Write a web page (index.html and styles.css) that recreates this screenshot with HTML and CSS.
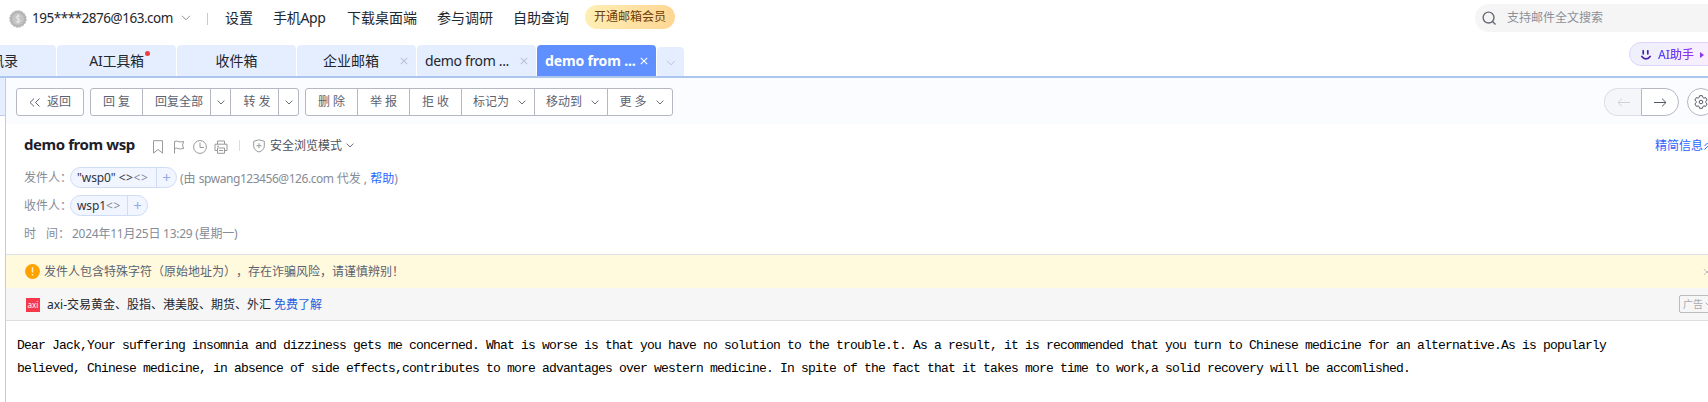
FILE: index.html
```html
<!DOCTYPE html>
<html lang="zh-CN">
<head>
<meta charset="utf-8">
<title>demo from wsp</title>
<link rel="stylesheet" href="styles.css">
</head>
<body>
<header class="topbar">
  <svg class="coin" viewBox="0 0 18 18"><circle cx="9" cy="9" r="8.2" fill="#b5b5b5" stroke="#b5b5b5" stroke-dasharray="2 1.2"/><circle cx="9" cy="9" r="6" fill="#c4c4c4"/><path d="M11.3 6.7C10.7 5.6 7 5.4 7 7.3 7 9.3 11.2 8.4 11.2 10.6 11.2 12.6 7.3 12.4 6.7 11.1M9 4.5v9" fill="none" stroke="#eee"/></svg>
  <span class="account">195****2876@163.com</span>
  <svg class="acc-arrow" viewBox="0 0 10 6"><path d="M1 .8l4 4 4-4" fill="none" stroke="#8c9099"/></svg>
  <i class="top-sep"></i>
  <nav class="topnav"><a>设置</a><a class="app">手机App</a><a>下载桌面端</a><a>参与调研</a><a>自助查询</a></nav>
  <a class="vip">开通邮箱会员</a>
  <div class="search">
    <svg viewBox="0 0 16 16"><circle cx="7" cy="7" r="5.8" fill="none" stroke="#666b75" stroke-width="1.5"/><path d="M11 11l3.4 3.4" stroke="#666b75" stroke-width="1.5"/></svg>
    <span>支持邮件全文搜索</span>
  </div>
</header>
<div class="tabs">
  <div class="tab first"><span>通讯录</span></div>
  <div class="tab center"><span class="dotted">AI工具箱</span></div>
  <div class="tab center"><span>收件箱</span></div>
  <div class="tab closable"><span class="wide">企业邮箱</span><svg class="x" viewBox="0 0 8 8"><path d="M.8.8l6.4 6.4M7.2.8L.8 7.2"/></svg></div>
  <div class="tab closable"><span class="demo">demo from ...</span><svg class="x" viewBox="0 0 8 8"><path d="M.8.8l6.4 6.4M7.2.8L.8 7.2"/></svg></div>
  <div class="tab closable active"><span class="demo">demo from ...</span><svg class="x" viewBox="0 0 8 8"><path d="M.8.8l6.4 6.4M7.2.8L.8 7.2"/></svg></div>
  <div class="tab more"><svg viewBox="0 0 10 6"><path d="M1 .8l4 4 4-4" fill="none" stroke="#b9c3d8"/></svg></div>
  <div class="assistant">
    <svg class="smile" viewBox="0 0 10 10"><path d="M2.2.8v3M6.8.8v3M.8 6.4C2.8 9.8 7.2 9.8 9.2 6.4" fill="none" stroke="#4b1fa8" stroke-width="1.7" stroke-linecap="round"/></svg>
    <span>AI助手</span>
    <svg class="play" viewBox="0 0 4 6"><path d="M0 0l4 3-4 3z" fill="#8a35ee"/></svg>
  </div>
</div>
<div class="workspace">
  <aside class="rail"><div class="rail-head"></div></aside>
  <main class="mail">
    <div class="toolbar">
      <div class="group back"><button><svg class="dbl" viewBox="0 0 12 9"><path d="M5 .6L1 4.5l4 3.9M10.5.6l-4 3.9 4 3.9" fill="none" stroke="#5c6270"/></svg>返回</button></div>
      <div class="group">
        <button class="w52">回 复</button><button class="w68">回复全部</button><button class="drop"><svg class="chev" viewBox="0 0 8 5"><path d="M.7.6L4 4 7.3.6"/></svg></button><button class="w48">转 发</button><button class="drop last"><svg class="chev" viewBox="0 0 8 5"><path d="M.7.6L4 4 7.3.6"/></svg></button>
      </div>
      <div class="group">
        <button class="w52">删 除</button><button class="w52">举 报</button><button class="w52">拒 收</button><button class="w73">标记为<svg class="chev" viewBox="0 0 8 5"><path d="M.7.6L4 4 7.3.6"/></svg></button><button class="w73">移动到<svg class="chev" viewBox="0 0 8 5"><path d="M.7.6L4 4 7.3.6"/></svg></button><button class="w64">更 多<svg class="chev" viewBox="0 0 8 5"><path d="M.7.6L4 4 7.3.6"/></svg></button>
      </div>
      <div class="pager">
        <button class="prev"><svg viewBox="0 0 13 9"><path d="M13 4.5H1M5 .6L1 4.5l4 3.9" fill="none" stroke="#d0d2d9"/></svg></button><button class="next"><svg viewBox="0 0 13 9"><path d="M0 4.5h12M8 .6l4 3.9-4 3.9" fill="none" stroke="#555b66"/></svg></button>
      </div>
      <button class="gear"><svg viewBox="0 0 14 14"><path d="M5.6 .7h2.8l.5 1.8 1 .6 1.8-.5 1.4 2.4-1.3 1.4v1.2l1.3 1.4-1.4 2.4-1.8-.5-1 .6-.5 1.800H5.600l-.5-1.800-1-.6-1.800.5L.9 9l1.300-1.400V6.400L.9 5l1.400-2.400 1.800.5 1-.6z" fill="none" stroke="#555b66"/><circle cx="7" cy="7" r="1.8" fill="none" stroke="#555b66"/></svg></button>
    </div>
    <section class="head">
      <div class="subject-row">
        <h1>demo from wsp</h1>
        <svg class="ic bookmark" viewBox="0 0 12 14"><path d="M1.5.7h9v12.4L6 9.5l-4.500 3.600z"/></svg>
        <svg class="ic flag" viewBox="0 0 12 14"><path d="M1.500 13.500V1.500C4 0 6 3 10.700 1.500L9.500 5l1.200 3.500C6 10 4 7 1.500 8.500"/></svg>
        <svg class="ic clock" viewBox="0 0 14 14"><circle cx="7" cy="7" r="6.400"/><path d="M7 2.800V7.500h4"/></svg>
        <svg class="ic printer" viewBox="0 0 14 14"><path d="M3.500 4V1h7v3M3.500 10.500h-2.500V4.200h12v6.300h-2.500M3.500 8h7v5.300h-7zM5 10.500h4M3 6.200h2"/></svg>
        <i class="sub-sep"></i>
        <svg class="ic shield" viewBox="0 0 12 14"><path d="M6 .8L11.300 2.300v4.900C11.300 10 9 12 6 13 3 12 .7 10 .7 7.200V2.300zM6 4.200v5M3.500 6.700h5"/></svg>
        <span class="safe">安全浏览模式</span>
        <svg class="chev" viewBox="0 0 8 5"><path d="M.7.6L4 4 7.3.6"/></svg>
        <a class="brief">精简信息<svg viewBox="0 0 8 8"><path d="M.5 4L3.500 1l3 3M.5 7.500l3-3 3 3" fill="none" stroke="#2b66ff"/></svg></a>
      </div>
      <div class="row">
        <span class="label">发件人：</span>
        <span class="pill"><span class="name from">"wsp0" <span class="angle">&lt;&gt;</span><em>&lt;&gt;</em></span><b>+</b></span>
        <span class="via"><span>(由 </span><span class="addr">spwang123456@126.com</span><span> 代发 , </span><a>帮助</a>)</span>
      </div>
      <div class="row second">
        <span class="label">收件人：</span>
        <span class="pill"><span class="name to">wsp1<em>&lt;&gt;</em></span><b>+</b></span>
      </div>
      <div class="row third">
        <span class="label time-label"><span>时</span><span>间：</span></span>
        <span class="time">2024年11月25日 13:29 (星期一)</span>
      </div>
    </section>
    <div class="warning">
      <svg class="alert" viewBox="0 0 15 15"><circle cx="7.500" cy="7.500" r="7.400" fill="#ffa200"/><path d="M7.500 3.300v5.200M7.500 10v1.600" stroke="#fff3c0" stroke-width="1.500"/></svg>
      <span>发件人包含特殊字符（原始地址为），存在诈骗风险，请谨慎辨别！</span>
      <svg class="close" viewBox="0 0 8 8"><path d="M.8.8l6.400 6.400M7.200.8L.8 7.200" fill="none" stroke="#c0c0bd"/></svg>
    </div>
    <div class="ad">
      <span class="logo">axi</span>
      <span class="ad-text">axi-交易黄金、股指、港美股、期货、外汇</span><a>免费了解</a>
      <span class="ad-tag">广告<svg viewBox="0 0 8 5"><path d="M.7.600L4 4 7.300.600" fill="none" stroke="#aaa"/></svg></span>
    </div>
    <article class="body">
      <p>Dear Jack,Your suffering insomnia and dizziness gets me concerned. What is worse is that you have no solution to the trouble.t. As a result, it is recommended that you turn to Chinese medicine for an alternative.As is popularly</p>
      <p>believed, Chinese medicine, in absence of side effects,contributes to more advantages over western medicine. In spite of the fact that it takes more time to work,a solid recovery will be accomlished.</p>
    </article>
  </main>
</div>
</body>
</html>
```
FILE: styles.css
```css
* { box-sizing: border-box; }
html, body { margin: 0; height: 100%; overflow: hidden; }
body { width: 1708px; height: 402px; background: #fff; color: #22262f; font: 14px/20px "Noto Sans", "Noto Sans CJK SC", sans-serif; white-space: nowrap; text-spacing-trim: space-all; }
svg { display: block; flex: none; }
i { display: block; flex: none; }
button { font: inherit; margin: 0; padding: 0; border: 0; background: none; color: inherit; }

.topbar { display: flex; align-items: center; height: 45px; padding: 0 0 9px 9px; }
.coin { width: 18px; height: 18px; margin-top: 2px; }
.account { width: 142px; margin-left: 5px; font-size: 13.500px; letter-spacing: -.48px; }
.acc-arrow { width: 10px; height: 6px; margin-left: 7px; }
.top-sep { width: 1px; height: 12px; margin: 2px 17px 0 16px; background: #c8cad0; }
.topnav { display: flex; gap: 20px; }
.app { width: 54px; letter-spacing: -.3px; }
.vip { margin: -3px 0 0 16px; width: 90px; height: 24px; border-radius: 12px; background: linear-gradient(90deg, #ffefb5, #ffd693); color: #6b3c08; font-size: 12px; line-height: 23px; text-align: center; }
.search { display: flex; align-items: center; width: 250px; height: 28px; margin: 0 -17px 0 auto; border-radius: 14px; background: #f5f5f5; color: #8b8f98; font-size: 12px; flex: none; }
.search svg { width: 15px; height: 15px; margin: 0 10px 0 7px; }

.tabs { display: flex; align-items: flex-end; gap: 1px; height: 33px; border-bottom: 2px solid #adc6ee; }
.tab { display: flex; align-items: center; width: 119px; height: 31px; border-radius: 4px 4px 0 0; background: #e5eeff; flex: none; }
.tab.first { width: 56px; justify-content: flex-end; padding-right: 38px; border-top-left-radius: 0; overflow: hidden; }
.center { justify-content: center; }
.dotted { position: relative; letter-spacing: -.2px; }
.dotted::after { content: ""; position: absolute; right: -6px; top: 0; width: 5px; height: 5px; border-radius: 50%; background: #f13c3c; }
.closable { justify-content: space-between; padding: 0 8px; }
.wide { margin-left: 18px; }
.demo { letter-spacing: -.35px; }
.x { width: 8px; height: 8px; }
.x path { fill: none; stroke: #b9c3d8; stroke-width: 1.100; }
.active { background: #6090ff; color: #fff; font-weight: 700; }
.active .demo { letter-spacing: -.15px; }
.active .x path { stroke: #fff; }
.tab.more { width: 27px; height: 29px; justify-content: center; }
.more svg { width: 10px; height: 6px; margin-top: 2px; }
.assistant { display: flex; align-items: center; align-self: flex-start; width: 90px; height: 24px; margin: -3px -11px 0 auto; padding-left: 11px; border: 1px solid #dfd3fb; border-radius: 12px; background: linear-gradient(90deg, #eef0fc, #f8eeff); font-size: 12px; font-weight: 500; flex: none; }
.assistant span { margin: 2px 6px 0 7px; background: linear-gradient(90deg, #4d45ee, #9233ee); -webkit-background-clip: text; color: transparent; }
.smile { width: 10px; height: 10px; margin-top: 2px; }
.play { width: 4px; height: 6px; margin-top: 2px; }

.workspace { display: flex; height: 324px; }
.rail { width: 6px; border-right: 1px solid #bccdf1; flex: none; }
.rail-head { height: 38px; background: #e5eeff; border-bottom: 1px solid #bccdf1; }
.mail { width: 1702px; flex: none; }
.toolbar { display: flex; height: 46px; padding: 10px 0 0 10px; gap: 6px; background: #fbfcff; color: #5c6270; font-size: 12px; }
.group { display: flex; height: 28px; border: 1px solid #b5b8c3; border-radius: 3px; background: #fff; }
.group button { display: flex; align-items: center; justify-content: center; border-right: 1px solid #b5b8c3; }
.group button:last-child { border-right: 0; }
.back button { width: 66px; gap: 6px; }
.dbl { width: 12px; height: 9px; }
.w52 { width: 52px; }
.group .w68 { width: 68px; padding-left: 5px; }
.group .w48 { width: 48px; padding-left: 5px; }
.w73 { width: 73px; }
.w64 { width: 64px; }
.group .w73, .group .w64 { gap: 9px; padding-left: 3px; }
.drop { width: 20px; }
.last { width: 19px; }
.chev { width: 8px; height: 5px; }
.chev path { fill: none; stroke: #686e7a; }
.pager { display: flex; height: 28px; margin-left: auto; }
.pager button { display: flex; align-items: center; justify-content: center; width: 38px; border: 1px solid #b5b8c3; background: #fff; }
.pager svg { width: 13px; height: 9px; }
.pager .prev { width: 37px; border-color: #dddfe7; border-right: 0; border-radius: 14px 0 0 14px; background: #f5f6fa; }
.pager .next { border-radius: 0 14px 14px 0; }
.gear { display: flex; align-items: center; justify-content: center; width: 28px; height: 28px; margin: 0 -7px 0 2px; border: 1px solid #b5b8c3; border-radius: 50%; background: #fff; flex: none; }
.gear svg { width: 14px; height: 14px; }

.head { height: 131px; padding: 9px 0 0 18px; border-bottom: 1px solid #dfe2ea; color: #868b96; font-size: 12px; }
.subject-row { display: flex; align-items: center; height: 25px; }
h1 { width: 111px; margin: -3px 17px 0 0; color: #1c202a; font-size: 15px; line-height: 22px; letter-spacing: -.42px; }
.ic { width: 12px; height: 14px; margin-top: 2px; }
.ic path, .ic circle { fill: none; stroke: #999; }
.flag { margin-left: 9px; }
.clock { width: 14px; margin-left: 8px; }
.printer { width: 14px; margin-left: 7px; }
.sub-sep { width: 1px; height: 11px; margin: 0 13px 0 11px; background: #dcdde2; }
.shield { margin-top: 0; }
.safe { margin: 1px 4px 0 5px; color: #4d525d; }
.brief { display: flex; align-items: center; gap: 1px; margin: 0 -4px 0 auto; color: #2b66ff; }
.brief svg { width: 8px; height: 8px; }
.row { display: flex; align-items: center; height: 21px; margin-top: 9px; }
.row.second { margin-top: 7px; }
.row.third { margin-top: 7px; }
.label { width: 46px; }
.time-label { display: flex; gap: 10px; width: 48px; }
.pill { display: flex; height: 21px; border: 1px solid #cfdcf5; border-radius: 11px; background: #f1f5ff; line-height: 19px; }
.name { padding-left: 6px; color: #30343d; }
.from { width: 85px; letter-spacing: -.1px; }
.to { width: 56px; letter-spacing: -.1px; }
em, .angle { font-style: normal; letter-spacing: .6px; }
em { color: #868b96; }
.pill b { width: 20px; border-left: 1px solid #cfdcf5; color: #8eabea; font-weight: 400; font-size: 15px; text-align: center; }
.via { margin: 2px 0 0 3px; }
.addr { letter-spacing: -.45px; }
.via a { color: #2b66ff; }
.time { letter-spacing: -.25px; }

.warning { display: flex; align-items: center; height: 33px; padding-left: 19px; background: #fffade; color: #5c6270; font-size: 12px; }
.alert { width: 15px; height: 15px; margin-right: 4px; }
.close { width: 8px; height: 8px; margin: 0 -3px 0 auto; }
.ad { display: flex; align-items: center; height: 33px; padding: 1px 0 0 20px; border-bottom: 1px solid #dedfe2; background: #f6f6f6; font-size: 12px; }
.logo { width: 14px; height: 14px; margin-right: 7px; background: #f6384b; color: #fff; font-size: 8px; line-height: 13px; text-align: center; }
.ad a { margin-left: 3px; color: #1d5fe0; }
.ad-tag { display: flex; align-items: center; gap: 2px; width: 38px; height: 18px; margin: -1px -9px 0 auto; padding-left: 3px; border: 1px solid #bbb; border-radius: 2px; color: #aaa; font-size: 10px; }
.ad-tag svg { width: 8px; height: 5px; }
.body { padding: 13px 0 0 11px; color: #000; font: 13px/23px "Liberation Mono", monospace; letter-spacing: -.801px; }
.body p { margin: 0; }
```
